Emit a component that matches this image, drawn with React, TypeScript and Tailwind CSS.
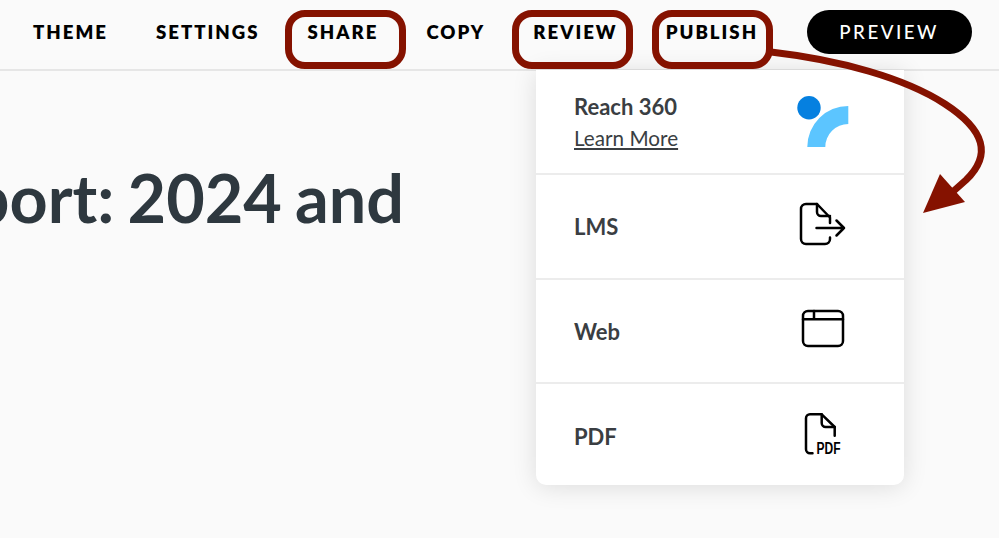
const navItems = ["THEME", "SETTINGS", "SHARE", "COPY", "REVIEW", "PUBLISH"];
const boxes = ["left-[285px] w-[121px]", "left-[512px] w-[121px]", "left-[652px] w-[121px]"];

function Logo() {
  return (
    <svg width="54" height="54" viewBox="796 95 54 54" fill="none">
      <path d="M848.300 106V124A23 23 0 0 0 825.300 147H807.300A41 41 0 0 1 848.300 106Z" fill="#5cc5ff" />
      <circle cx="809" cy="107.700" r="11.700" fill="#0580e0" />
    </svg>
  );
}

const stroke = { fill: "none", stroke: "#000", strokeWidth: 2.5, strokeLinecap: "round", strokeLinejoin: "round" } as const;

function LmsIcon() {
  return (
    <svg width="56" height="55" viewBox="794 199 56 55" {...stroke}>
      <path d="M830 237.500V239A5 5 0 0 1 825 244H806A5 5 0 0 1 801 239V209A5 5 0 0 1 806 204H817L830 217.500V223" />
      <path d="M817 204V212A4 4 0 0 0 821 216H830" />
      <path d="M816.500 228H844M836.500 220.500L844 228L836.500 235.500" />
    </svg>
  );
}

function WebIcon() {
  return (
    <svg width="56" height="55" viewBox="794 304 56 55" {...stroke}>
      <rect x="803" y="311" width="40" height="35" rx="5" />
      <path d="M803 319.300H843M814 311V319.300" />
    </svg>
  );
}

function PdfIcon() {
  return (
    <svg width="56" height="55" viewBox="794 409 56 55" {...stroke}>
      <path d="M812.500 453.300H810A4 4 0 0 1 806 449.300V418.300A4 4 0 0 1 810 414.300H821.700L834.700 427V435.700" />
      <path d="M821.700 414.300V423A4 4 0 0 0 825.700 427H834.700" />
      <text x="816.500" y="453.500" fontFamily="'Liberation Sans', sans-serif" fontSize="16" fontWeight="700" fill="#000" stroke="none" textLength="24" lengthAdjust="spacingAndGlyphs">PDF</text>
    </svg>
  );
}

function Row({ label, icon, className }: { label: string; icon: React.ReactNode; className: string }) {
  return (
    <div className={`flex items-center justify-between border-t-2 border-[#ececec] pl-[38px] pr-[54px] ${className}`}>
      <span className="text-[22px] leading-[30px] font-bold text-[#3a3e42]">{label}</span>
      {icon}
    </div>
  );
}

export default function App() {
  return (
    <div className="relative h-[538px] w-[999px] overflow-hidden bg-[#fafafa] font-['Lato','Liberation_Sans',sans-serif]">
      <header className="flex h-[71px] items-start border-b-2 border-[#e6e6e6] pl-[33px] pt-[10px]">
        <nav className="flex h-[44px] items-center gap-[48px]">
          {navItems.map((item) => (
            <span key={item} className="text-[18.600px] leading-none font-extrabold tracking-[2px] text-black">
              {item}
            </span>
          ))}
        </nav>
        <button className="ml-[48.500px] flex h-[44px] w-[165px] items-center justify-center rounded-[22px] bg-black text-[18.700px] font-medium tracking-[2.500px] text-white">
          PREVIEW
        </button>
      </header>

      <main className="mt-[86px] flex w-[404px] justify-end overflow-hidden">
        <h1 className="text-[66.500px] leading-[80px] font-bold whitespace-nowrap text-[#2e383f] [word-spacing:-3px]">Report: 2024 and</h1>
      </main>

      <div className="absolute top-[70px] left-[536px] w-[368px] rounded-b-[10px] bg-white shadow-[0_2px_24px_rgba(0,0,0,0.12)]">
        <div className="flex h-[103px] items-center justify-between pl-[38px] pr-[54px] pt-[1px]">
          <div className="flex flex-col">
            <span className="text-[22px] leading-[32px] font-bold text-[#3a3e42]">Reach 360</span>
            <span className="text-[20.700px] leading-[30px] text-[#3a3e42] underline">Learn More</span>
          </div>
          <Logo />
        </div>
        <Row label="LMS" icon={<LmsIcon />} className="h-[105px]" />
        <Row label="Web" icon={<WebIcon />} className="h-[104px] pt-[1px]" />
        <Row label="PDF" icon={<PdfIcon />} className="h-[103px] pt-[4px]" />
      </div>

      {boxes.map((box) => (
        <div key={box} className={`absolute top-[10px] h-[59px] rounded-[20px] border-[7px] border-[#851200] ${box}`} />
      ))}

      <svg className="absolute top-0 left-0" width="999" height="538" fill="none">
        <path d="M771 52C840 60 905 78 945 104C985 130 992 155 966 180L948 196" stroke="#851200" strokeWidth="7" />
        <path d="M923 213L940 174L965 202Z" fill="#851200" />
      </svg>
    </div>
  );
}
